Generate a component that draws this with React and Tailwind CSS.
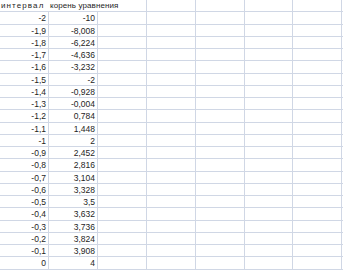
import React from "react";

const rows = [
  ["-2", "-10"],
  ["-1,9", "-8,008"],
  ["-1,8", "-6,224"],
  ["-1,7", "-4,636"],
  ["-1,6", "-3,232"],
  ["-1,5", "-2"],
  ["-1,4", "-0,928"],
  ["-1,3", "-0,004"],
  ["-1,2", "0,784"],
  ["-1,1", "1,448"],
  ["-1", "2"],
  ["-0,9", "2,452"],
  ["-0,8", "2,816"],
  ["-0,7", "3,104"],
  ["-0,6", "3,328"],
  ["-0,5", "3,5"],
  ["-0,4", "3,632"],
  ["-0,3", "3,736"],
  ["-0,2", "3,824"],
  ["-0,1", "3,908"],
  ["0", "4"],
  ["", ""],
];

const cell = "border-b border-r border-[#d0d7e5] overflow-hidden whitespace-nowrap";
const empty = [0, 1, 2, 3, 4, 5];

export default function App() {
  return (
    <div className="w-[343px] h-[270px] overflow-hidden bg-white text-[8.5px] leading-[12.25px] text-[#1e1e1e] font-['Liberation_Sans',Arial,sans-serif]">
      <div className="grid grid-cols-[49px_49px_49px_49px_49px_48px_49px_49px] auto-rows-[12.25px]">
        {/* header row: text spills over the gridlines like in the sheet */}
        <div className="col-span-3 flex text-[8px] border-b border-r border-[#d0d7e5] overflow-visible whitespace-nowrap">
          <span className="w-[50px] pl-px tracking-[1.1px]">интервал</span>
          <span className="tracking-[0.1px]">корень уравнения</span>
        </div>
        {empty.slice(0, 5).map((i) => (
          <div key={"h" + i} className={cell} />
        ))}
        {rows.map(([x, y], r) => (
          <React.Fragment key={r}>
            <div className={cell + " text-right pr-[2px]"}>{x}</div>
            <div className={cell + " text-right pr-[2px]"}>{y}</div>
            {empty.map((i) => (
              <div key={i} className={cell} />
            ))}
          </React.Fragment>
        ))}
      </div>
    </div>
  );
}
